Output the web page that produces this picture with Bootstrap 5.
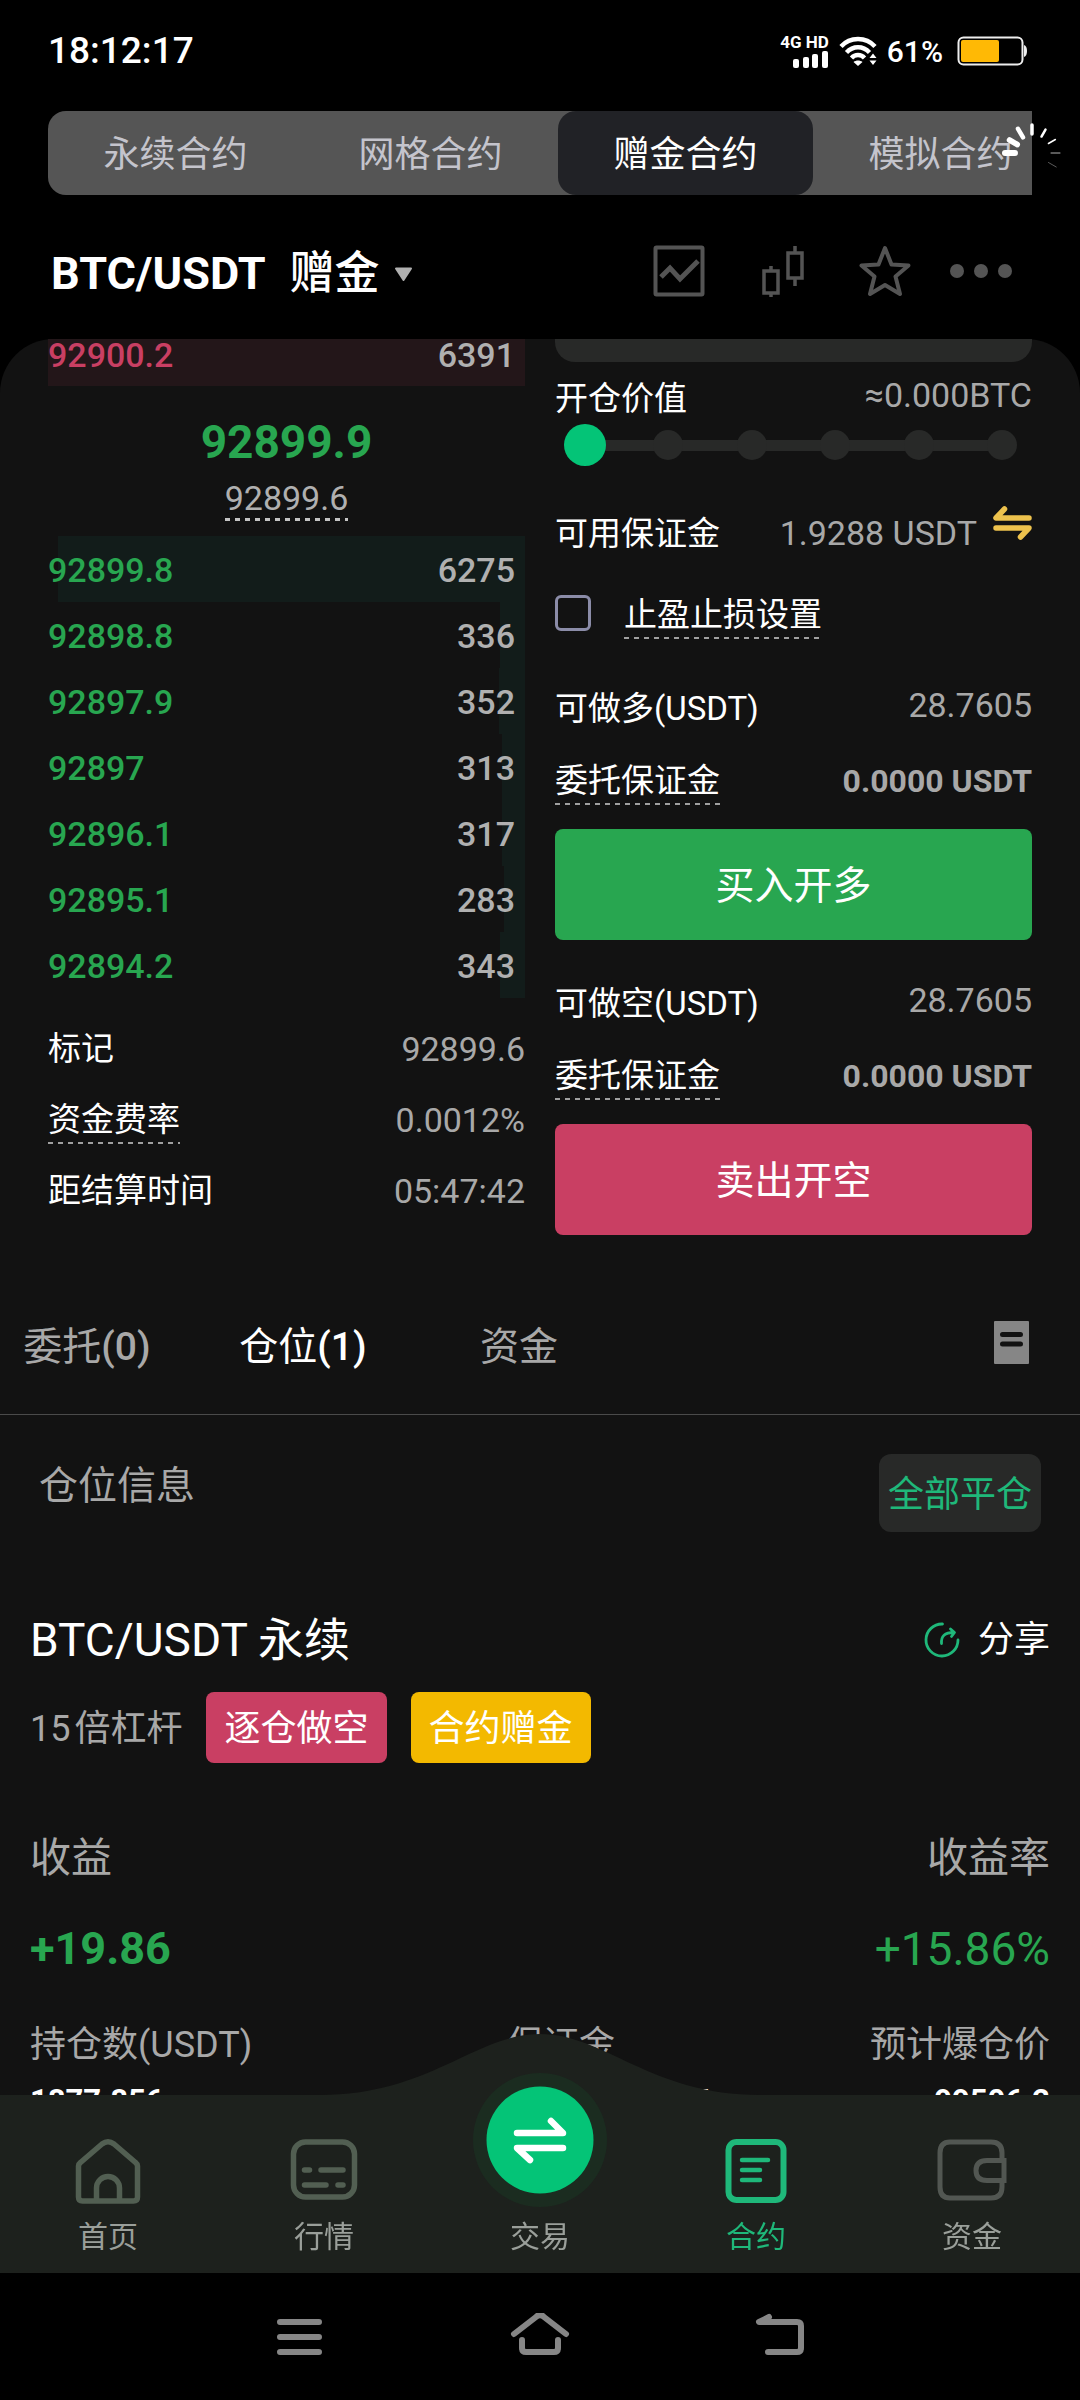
<!DOCTYPE html>
<html lang="zh-CN" data-bs-theme="dark">
<head>
<meta charset="utf-8">
<meta name="viewport" content="width=device-width, initial-scale=1">
<title>BTC/USDT 赠金合约</title>
<link href="https://cdn.jsdelivr.net/npm/bootstrap@5.3.0/dist/css/bootstrap.min.css" rel="stylesheet">
<style>
  :root { --up: #28a650; --down: #c93f63; --brand: #04c477; --dim: #a8a8a8; --field: #282928; --panel: #121212; }
  body { background: #000; color: #fff; font-family: Roboto, "Noto Sans CJK SC", sans-serif; font-size: 33px; line-height: 48px; }
  svg { display: block; flex: none; }
  a { color: inherit; text-decoration: none; }
  button { padding: 0; border: 0; background: none; color: inherit; }
  .text-up { color: var(--up); }
  .text-down { color: var(--down); }
  .text-dim { color: var(--dim); }
  .side-pad { padding-left: 48px; padding-right: 48px; }

  .status-bar { height: 101px; }
  .clock { font-size: 37px; font-weight: 500; }
  .net-label { font-size: 17px; line-height: 17px; font-weight: 700; }
  .charge { font-size: 30px; line-height: 48px; font-weight: 500; padding-top: 3px; }
  .status-icons { gap: 10px; }

  .kind-wrap { margin: 10px 48px 0; }
  .kind-tabs { background: #555; border-radius: 18px 0 0 18px; }
  .kind-tabs button { flex: 0 0 255px; height: 84px; padding-top: 4px; font-size: 36px; color: #c4c4cc; border-radius: 18px; }
  .kind-tabs .active { background: #212226; color: #fff; }
  .loading-mark { position: absolute; top: 12px; right: -30px; }

  .pair-bar { padding-top: 48px; padding-bottom: 34px; }
  .pair-name { font-size: 45px; line-height: 62px; font-weight: 700; padding-left: 3px; }
  .pair-name .kind { font-weight: 500; margin-left: 24px; }
  .caret { margin-left: 14px; }
  .tools { color: #545454; margin-right: 20px; padding-bottom: 7px; }
  .tools .candles { margin-left: 57px; }
  .tools .star { margin-left: 55px; }
  .tools .dots { margin-left: 39px; }

  .panel { background: var(--panel); border-radius: 54px 54px 0 0; }
  .trade-cols { gap: 30px; }
  .trade-cols > section { flex: 1 1 0; min-width: 0; }

  .book-row { height: 66px; padding-right: 10px; font-size: 34px; font-weight: 500; line-height: 68px; color: #b0b0b0;
    background: linear-gradient(var(--depth), var(--depth)) right / var(--fill) 100% no-repeat; }
  .book-row.ask { height: 47px; line-height: 32px; }
  .ask { --depth: #231619; }
  .bid { --depth: #121c1a; }
  .last-block { height: 150px; padding-top: 33px; }
  .last-price { font-size: 46px; font-weight: 700; line-height: 46px; }
  .mark-price { font-size: 34px; line-height: 46px; margin-top: 10px; color: #b0b0b0;
    background: repeating-linear-gradient(90deg, #c4c4c4 0 5px, transparent 5px 10px) bottom / 100% 3px no-repeat; }
  .hint { background: repeating-linear-gradient(90deg, #a0a0a0 0 5px, transparent 5px 10px) bottom / 100% 2px no-repeat; }
  .stats { margin-top: 27px; gap: 23px; }
  .trade-cols .num { font-size: 34px; }
  .trade-cols b { font-size: 32px; }

  .amount-box { height: 23px; border: 0; background: var(--field); border-radius: 0 0 20px 20px; }
  .value-row { margin-top: 13px; }
  .raised { line-height: 40px; }
  .slider { height: 42px; margin: 1px 9px 0; padding: 0 6px; }
  .slider::before { content: ""; position: absolute; left: 21px; right: 21px; height: 11px; background: var(--field); }
  .slider span { width: 30px; height: 30px; border-radius: 50%; background: var(--field); z-index: 1; }
  .slider input { position: absolute; left: 0; width: 100%; height: 42px; margin: 0; background: none; appearance: none; z-index: 2; }
  .slider input::-webkit-slider-thumb { appearance: none; width: 42px; height: 42px; border-radius: 50%; background: var(--brand); }
  .avail-row { margin-top: 40px; line-height: 55px; }
  .stop-row { margin-top: 30px; gap: 33px; }
  .stop-row input { appearance: none; width: 36px; height: 36px; margin: 4px 0 0; border: 3px solid #8b8ca8; border-radius: 6px; }
  .side-row { margin-top: 46px; }
  .side-row.second { margin-top: 40px; }
  .cost-row { margin-top: 24px; }
  .btn-trade { height: 111px; margin-top: 24px; padding-top: 10px; border-radius: 8px; font-size: 39px; color: #fff; }
  .btn-trade.buy, .btn-trade.buy:hover { background: var(--up); color: #fff; }
  .btn-trade.sell, .btn-trade.sell:hover { background: var(--down); color: #fff; }

  .record-bar { margin-top: 86px; padding-right: 51px; padding-bottom: 41px; border-bottom: 1px solid #4a4a4a; }
  .record-tabs { margin-left: -21px; }
  .record-tabs a { width: 216px; text-align: center; font-size: 39px; line-height: 52px; color: var(--dim); }
  .record-tabs a b { font-weight: 500; }
  .record-tabs a.current { color: #fff; }

  .info-bar { margin-top: 39px; padding: 0 39px; font-size: 39px; line-height: 64px; }
  .close-all { height: 78px; padding: 3px 9px 0; font-size: 36px; background: var(--field); color: #1fb87a; border-radius: 12px; }
  .position { padding: 0 30px; }
  .pos-title { margin-top: 77px; font-size: 46px; line-height: 62px; }
  .pos-title .term { margin-left: 10px; }
  .share { font-size: 36px; gap: 18px; }
  .pos-tags { height: 71px; margin-top: 21px; gap: 24px; font-size: 36px; line-height: 75px; }
  .pos-tags .tag { padding: 0 18px; border-radius: 8px; color: #fff; }
  .tag-short { background: var(--down); }
  .tag-gift { background: #f3b900; }
  .gain-label { margin-top: 70px; font-size: 41px; line-height: 50px; }
  .gain-value { margin-top: 41px; font-size: 46px; line-height: 50px; }
  .gain-value b { font-size: 45px; }
  .pos-detail { margin-top: 46px; font-size: 36px; line-height: 50px; }
  .pos-detail b { display: block; margin-top: 11px; font-size: 31px; line-height: 40px; color: #fff; }
  .margin-col { width: 108px; white-space: nowrap; }

  .tab-bar { background: #1d211d; height: 178px; }
  .tab-bar .hump { position: absolute; left: 50%; top: -61px; transform: translateX(-50%); }
  .tab-bar a { position: relative; flex: 1 1 0; padding-top: 43px; font-size: 30px; line-height: 40px; color: #9a9f9a; }
  .tab-bar a svg { margin-bottom: 11px; }
  .tab-bar a.current { color: #1fb87a; }
  .trade-fab { position: absolute; bottom: 66px; left: 50%; margin-left: -67px; }
  .tab-bar .trade-fab svg { margin: 0; }
  .system-bar { height: 127px; padding: 0 180px; background: #000; color: #868686; }
  .system-bar button { flex: 1 1 0; }
</style>
</head>
<body class="d-flex flex-column min-vh-100">

<header>
  <div class="status-bar side-pad d-flex align-items-center justify-content-between">
    <span class="clock">18:12:17</span>
    <div class="status-icons d-flex align-items-center">
      <div class="d-flex flex-column align-items-end">
        <span class="net-label">4G HD</span>
        <svg width="36" height="17" viewBox="0 0 36 17" fill="#fff"><rect x="0" y="8" width="6" height="9" rx="2"/><rect x="10" y="6" width="6" height="11" rx="2"/><rect x="19" y="3" width="6" height="14" rx="2"/><rect x="29" y="0" width="6" height="17" rx="2"/></svg>
      </div>
      <svg width="38" height="30" viewBox="0 0 38 30" fill="none" stroke="#fff" stroke-width="4.4">
        <path d="M2 10.5C11 .5 27 .5 36 10.500"/><path d="M7.500 16.500C14 9.500 24 9.500 30.500 16.500"/><path d="M12.500 22C16 18 22 18 25.500 22"/>
        <path d="M14.500 26C17 24 21 24 23.500 26L19 30Z" fill="#fff" stroke="none"/><path d="M30.500 22L34 17.500L37.500 22ZM30.500 24.500H37.500L34 29Z" fill="#fff" stroke="none"/>
      </svg>
      <span class="charge">61%</span>
      <svg width="71" height="30" viewBox="0 0 71 30" class="ms-1 me-1"><rect x="1.500" y="1.500" width="64" height="27" rx="5" fill="none" stroke="#eee" stroke-width="2"/><rect x="4" y="4" width="38" height="22" rx="2" fill="#ffb905"/><path d="M67 9Q70 10 70 15T67 21Z" fill="#eee"/></svg>
    </div>
  </div>

  <div class="kind-wrap position-relative">
    <div class="kind-tabs d-flex overflow-hidden">
      <button type="button">永续合约</button>
      <button type="button">网格合约</button>
      <button type="button" class="active">赠金合约</button>
      <button type="button">模拟合约</button>
    </div>
    <svg class="loading-mark" width="60" height="60" viewBox="-30 -30 60 60" stroke="#fff" stroke-linecap="round">
      <path d="M-17 0H-27" stroke-width="6"/><path d="M-17 0H-26" stroke-width="5.500" transform="rotate(30)"/><path d="M-18 0H-28" stroke-width="4.500" transform="rotate(60)"/><path d="M-19 0H-28" stroke-width="3.500" transform="rotate(90)"/><path d="M-19 0H-27" stroke-width="2.500" transform="rotate(120)"/><path d="M-19 0H-27" stroke-width="1.500" transform="rotate(150)"/><path d="M19 0H28" stroke-width="1" opacity=".7"/><path d="M19 0H28" stroke-width=".8" opacity=".4" transform="rotate(30)"/>
    </svg>
  </div>

  <div class="pair-bar side-pad d-flex align-items-center justify-content-between">
    <button type="button" class="pair-name d-flex align-items-center">BTC/USDT<span class="kind">赠金</span>
      <svg class="caret" width="19" height="15" viewBox="0 0 19 15"><path d="M2 1.500H17L9.500 13Z" fill="#b0b0b0" stroke="#b0b0b0" stroke-width="2" stroke-linejoin="round"/></svg>
    </button>
    <div class="tools d-flex align-items-center">
      <svg width="52" height="52" viewBox="0 0 52 52" fill="none" stroke="currentColor" stroke-width="4"><rect x="2.500" y="2.500" width="47" height="47" rx="1"/><path d="M8 32L17 23L27 34L45 16" stroke-width="5"/></svg>
      <svg class="candles" width="42" height="52" viewBox="0 0 42 52" fill="none" stroke="currentColor" stroke-width="3.500"><rect x="2" y="26" width="14" height="22"/><path d="M9 21V25M9 48V52"/><rect x="26" y="8" width="14" height="25"/><path d="M33 1V8M33 34V41"/></svg>
      <svg class="star" width="52" height="52" viewBox="0 0 52 52" fill="none" stroke="currentColor" stroke-width="4" stroke-linejoin="round"><path d="M26 3L32.500 19.500L49.500 20.500L36.500 31.500L41 49L26 40L11 49L15.500 31.500L2.500 20.500L19.500 19.500Z"/></svg>
      <svg class="dots" width="62" height="14" viewBox="0 0 62 14" fill="currentColor"><circle cx="7" cy="7" r="7"/><circle cx="31" cy="7" r="7"/><circle cx="55" cy="7" r="7"/></svg>
    </div>
  </div>
</header>

<main class="panel flex-grow-1">
  <div class="trade-cols side-pad d-flex">
    <section>
      <div class="book">
        <div class="book-row ask d-flex justify-content-between" style="--fill:100%"><span class="text-down">92900.2</span><span>6391</span></div>
        <div class="last-block d-flex flex-column align-items-center">
          <span class="last-price text-up">92899.9</span>
          <span class="mark-price">92899.6</span>
        </div>
        <div class="book-row bid d-flex justify-content-between" style="--fill:98%"><span class="text-up">92899.8</span><span>6275</span></div>
        <div class="book-row bid d-flex justify-content-between" style="--fill:25px"><span class="text-up">92898.8</span><span>336</span></div>
        <div class="book-row bid d-flex justify-content-between" style="--fill:26px"><span class="text-up">92897.9</span><span>352</span></div>
        <div class="book-row bid d-flex justify-content-between" style="--fill:23px"><span class="text-up">92897</span><span>313</span></div>
        <div class="book-row bid d-flex justify-content-between" style="--fill:23px"><span class="text-up">92896.1</span><span>317</span></div>
        <div class="book-row bid d-flex justify-content-between" style="--fill:21px"><span class="text-up">92895.1</span><span>283</span></div>
        <div class="book-row bid d-flex justify-content-between" style="--fill:25px"><span class="text-up">92894.2</span><span>343</span></div>
      </div>
      <div class="stats d-flex flex-column">
        <div class="d-flex justify-content-between"><span>标记</span><span class="text-dim num">92899.6</span></div>
        <div class="d-flex justify-content-between"><span class="hint">资金费率</span><span class="text-dim num">0.0012%</span></div>
        <div class="d-flex justify-content-between"><span>距结算时间</span><span class="text-dim num">05:47:42</span></div>
      </div>
    </section>

    <section>
      <div class="amount-box"></div>
      <div class="value-row d-flex justify-content-between align-items-start"><label for="ratio">开仓价值</label><span class="text-dim num raised">≈0.000BTC</span></div>
      <div class="slider position-relative d-flex align-items-center justify-content-between">
        <span></span><span></span><span></span><span></span><span></span><span></span>
        <input type="range" id="ratio" min="0" max="100" step="20" value="0">
      </div>
      <div class="avail-row d-flex align-items-start">
        <span class="me-auto">可用保证金</span><span class="text-dim num">1.9288 USDT</span>
        <svg class="ms-3" width="39" height="34" viewBox="0 0 39 34" fill="none" stroke="#edc24d" stroke-width="5.500" stroke-linecap="round" stroke-linejoin="round"><path d="M11.500 3L3 12H36"/><path d="M3 22H36L27.500 31"/></svg>
      </div>
      <div class="stop-row d-flex align-items-start"><input type="checkbox" id="stop"><label for="stop" class="hint">止盈止损设置</label></div>

      <div class="side-row d-flex justify-content-between align-items-start"><span>可做多(USDT)</span><span class="text-dim num raised">28.7605</span></div>
      <div class="cost-row d-flex justify-content-between align-items-start"><span class="hint">委托保证金</span><b class="text-dim">0.0000 USDT</b></div>
      <button type="button" class="btn btn-trade buy w-100">买入开多</button>

      <div class="side-row second d-flex justify-content-between align-items-start"><span>可做空(USDT)</span><span class="text-dim num raised">28.7605</span></div>
      <div class="cost-row d-flex justify-content-between align-items-start"><span class="hint">委托保证金</span><b class="text-dim">0.0000 USDT</b></div>
      <button type="button" class="btn btn-trade sell w-100">卖出开空</button>
    </section>
  </div>

  <div class="record-bar d-flex justify-content-between align-items-start">
    <nav class="record-tabs d-flex">
      <a href="#">委托<b>(0)</b></a><a href="#" class="current">仓位<b>(1)</b></a><a href="#">资金</a>
    </nav>
    <button type="button" aria-label="记录"><svg width="35" height="43" viewBox="0 0 35 43"><rect width="35" height="43" rx="1" fill="#868686"/><path d="M8.500 13.500H26.500M8.500 23H26.500" stroke="#121212" stroke-width="5" stroke-linecap="round"/></svg></button>
  </div>

  <div class="info-bar d-flex justify-content-between align-items-start">
    <span class="text-dim">仓位信息</span>
    <button type="button" class="close-all">全部平仓</button>
  </div>

  <section class="position">
    <div class="pos-title d-flex justify-content-between align-items-center">
      <div>BTC/USDT<span class="term">永续</span></div>
      <a href="#" class="share d-flex align-items-center"><svg width="36" height="36" viewBox="0 0 36 36" fill="none" stroke="#1fb87a" stroke-width="2.800" stroke-linecap="round" stroke-linejoin="round"><path d="M18.500 2A16 16 0 1 0 34 18"/><path d="M17.500 21.500C17 14 20.500 10.500 30 10.500M26.500 7L30.500 10.500L27.500 14.500"/></svg>分享</a>
    </div>
    <div class="pos-tags d-flex">
      <span class="text-dim">15<span class="ms-1">倍杠杆</span></span><span class="tag tag-short">逐仓做空</span><span class="tag tag-gift">合约赠金</span>
    </div>
    <div class="gain-label text-dim d-flex justify-content-between"><span>收益</span><span>收益率</span></div>
    <div class="gain-value text-up d-flex justify-content-between"><b>+19.86</b><span>+15.86%</span></div>
    <div class="pos-detail text-dim d-flex justify-content-between">
      <div>持仓数(USDT)<b>1877.856</b></div>
      <div class="margin-col">保证金<b>125.190 USDT</b></div>
      <div class="text-end">预计爆仓价<b>99506.2</b></div>
    </div>
  </section>
</main>

<footer class="fixed-bottom">
  <nav class="tab-bar position-relative d-flex">
    <svg class="hump" width="440" height="62" viewBox="0 0 440 62"><path d="M0 62V61C110 61 155 0 220 0S330 61 440 61V62Z" fill="#1d211d"/></svg>
    <a href="#" class="d-flex flex-column align-items-center">
      <svg width="66" height="68" viewBox="0 0 66 68" fill="none" stroke="#525f52" stroke-width="5.500" stroke-linejoin="round"><path d="M3.500 28Q3.500 26 5.500 24.500L27 6Q33 1.500 39 6L60.500 24.500Q62.500 26 62.500 28V59Q62.500 63 58.500 63H7.500Q3.500 63 3.500 59Z"/><path d="M21.500 62V50A11.500 11.500 0 0 1 44.500 50V62"/></svg>首页</a>
    <a href="#" class="d-flex flex-column align-items-center">
      <svg width="68" height="68" viewBox="0 0 68 68" fill="none" stroke="#525f52" stroke-width="5.500" stroke-linecap="round"><rect x="3.500" y="4" width="61" height="55" rx="12"/><path d="M14.500 32H19.500M31 32H53M14.500 47H36M48 47H53"/></svg>行情</a>
    <a href="#" class="d-flex flex-column align-items-center">
      <span class="trade-fab"><svg width="134" height="134" viewBox="0 0 134 134"><circle cx="67" cy="67" r="67" fill="#1b2c20"/><circle cx="67" cy="67" r="53.500" fill="#04c477"/><g fill="none" stroke="#fff" stroke-width="6.500" stroke-linecap="round" stroke-linejoin="round"><path d="M44 60H90L78 48"/><path d="M90 75H44L57 87"/></g></svg></span>
      <svg width="66" height="68" aria-hidden="true"></svg>交易</a>
    <a href="#" class="current d-flex flex-column align-items-center">
      <svg width="62" height="68" viewBox="0 0 62 68" fill="none" stroke="#1fb87a" stroke-width="6" stroke-linecap="round"><rect x="3.500" y="4" width="55" height="58" rx="8"/><path d="M17 22H43M17 32H35M17 42H35" stroke-width="4.500"/></svg>合约</a>
    <a href="#" class="d-flex flex-column align-items-center">
      <svg width="70" height="68" viewBox="0 0 70 68" fill="none" stroke="#525752" stroke-width="5"><path d="M65 22V15Q65 4 54 4H13Q3 4 3 15V49Q3 60 13 60H54Q65 60 65 49V43"/><path d="M67 22.500H50Q39 22.500 39 32.500T50 42.500H67Z"/></svg>资金</a>
  </nav>
  <div class="system-bar d-flex align-items-center">
    <button type="button" aria-label="菜单" class="d-flex justify-content-center"><svg width="48" height="48" viewBox="0 0 48 48" fill="none" stroke="currentColor" stroke-width="6" stroke-linecap="round"><path d="M4 9H43M4 24H43M4 39H43"/></svg></button>
    <button type="button" aria-label="主页" class="d-flex justify-content-center"><svg width="60" height="48" viewBox="0 0 60 48" fill="none" stroke="currentColor" stroke-width="6" stroke-linecap="round" stroke-linejoin="round"><path d="M4 21L26 4Q30 0 34 4L56 21"/><path d="M12 27V35Q12 39 16 39H44Q48 39 48 35V27"/></svg></button>
    <button type="button" aria-label="返回" class="d-flex justify-content-center"><svg width="50" height="48" viewBox="0 0 50 48" fill="none" stroke="currentColor" stroke-width="6" stroke-linecap="round" stroke-linejoin="round"><path d="M14 4L4 9H42Q46 9 46 13V35Q46 39 42 39H13"/></svg></button>
  </div>
</footer>

<script src="https://cdn.jsdelivr.net/npm/bootstrap@5.3.0/dist/js/bootstrap.bundle.min.js"></script>
</body>
</html>
